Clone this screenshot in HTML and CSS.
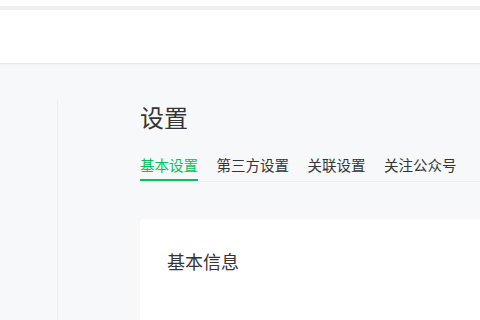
FILE: index.html
```html
<!DOCTYPE html>
<html lang="zh-CN">
<head>
<meta charset="utf-8">
<link rel="stylesheet" href="styles.css">
</head>
<body>
<div class="topstrip"></div>
<div class="band"></div>
<header class="header"></header>
<div class="layout">
  <aside class="sidebar"></aside>
  <main class="main">
    <h1 class="title">设置</h1>
    <nav class="tabs">
      <span class="tab active">基本设置</span>
      <span class="tab">第三方设置</span>
      <span class="tab">关联设置</span>
      <span class="tab">关注公众号</span>
    </nav>
    <section class="card">
      <h2 class="card-title">基本信息</h2>
    </section>
  </main>
</div>
</body>
</html>
```
FILE: styles.css
```css
html, body {
  margin: 0;
  padding: 0;
  height: 100%;
  overflow: hidden;
}
body {
  background: #f7f8fa;
  font-family: "Noto Sans CJK SC", "Noto Sans", sans-serif;
  color: #333;
}
.topstrip {
  height: 6px;
  background: #fff;
}
.band {
  height: 4px;
  background: #f0f0f0;
}
.header {
  height: 53px;
  background: #fff;
  border-bottom: 1px solid #e6e7e9;
  box-shadow: 0 1px 2px rgba(0,0,0,0.03);
}
.layout {
  display: flex;
  height: 256px;
  overflow: hidden;
}
.sidebar {
  width: 57px;
  flex: none;
  margin-top: 36px;
  border-right: 1px solid #eceef1;
}
.main {
  flex: 1;
  padding: 41px 0 0 82px;
  min-width: 0;
}
.title {
  margin: 0;
  font-size: 24px;
  line-height: 24px;
  font-weight: 400;
  color: #353535;
}
.tabs {
  display: flex;
  gap: 18.5px;
  margin-top: 26px;
  border-bottom: 1px solid #ebedf0;
}
.tab {
  font-size: 14.5px;
  line-height: 20px;
  padding-bottom: 4px;
  border-bottom: 2px solid transparent;
  color: #353535;
  white-space: nowrap;
}
.tab.active {
  color: #07c160;
  border-bottom-color: #07c160;
}
.card {
  margin-top: 37px;
  background: #fff;
  border-radius: 4px 0 0 0;
  padding: 29px 0 0 27px;
  height: 72px;
}
.card-title {
  margin: 0;
  font-size: 18px;
  line-height: 26px;
  font-weight: 400;
  color: #353535;
}
```
